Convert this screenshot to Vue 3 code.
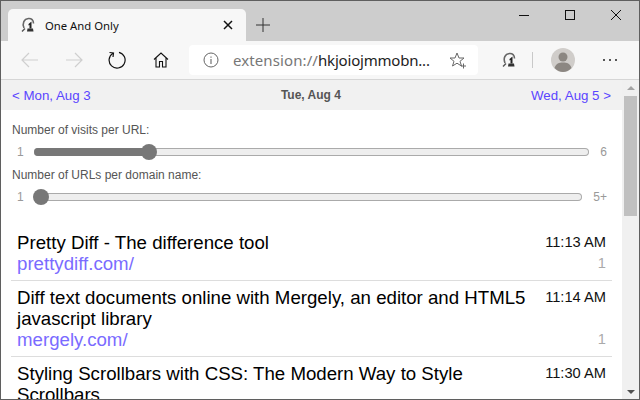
<template>
  <div class="window">
    <div class="tabstrip">
      <div class="tab">
        <svg class="favicon" width="16" height="16" viewBox="0 0 16 16">
          <path d="M4 11C2 6 4 2 8.500 1.500C11.500 1.300 13.500 3 13.500 6.500" fill="none" stroke="#666" stroke-width="1.600"/>
          <path d="M8.500 7L11.500 4.500V11.500H9.500V8L8.500 8.500Z" fill="#222"/>
          <path d="M7.500 11.500H13L13.500 14.500H7Z" fill="#333"/>
          <path d="M2 14.500L5 11.500" stroke="#555" stroke-width="1.500"/>
        </svg>
        <span class="tab-title">One And Only</span>
        <svg class="tab-close" width="10" height="10" viewBox="0 0 10 10">
          <path d="M1 1L9 9M9 1L1 9" stroke="#111" stroke-width="1.500"/>
        </svg>
      </div>
      <svg class="new-tab" width="14" height="14" viewBox="0 0 14 14">
        <path d="M7 0V14M0 7H14" stroke="#333" stroke-width="1"/>
      </svg>
      <div class="win-buttons">
        <svg width="12" height="12" viewBox="0 0 12 12"><path d="M1 6.500H11" stroke="#111"/></svg>
        <svg width="12" height="12" viewBox="0 0 12 12"><rect x="1.500" y="1.500" width="9" height="9" fill="none" stroke="#111"/></svg>
        <svg width="12" height="12" viewBox="0 0 12 12"><path d="M1 1L11 11M11 1L1 11" stroke="#111"/></svg>
      </div>
    </div>

    <div class="toolbar">
      <svg class="tool back" width="18" height="16" viewBox="0 0 18 16">
        <path d="M17 8H1M8 1L1 8L8 15" fill="none" stroke="#cfcfcf" stroke-width="1.200"/>
      </svg>
      <svg class="tool forward" width="18" height="16" viewBox="0 0 18 16">
        <path d="M1 8H17M10 1L17 8L10 15" fill="none" stroke="#cfcfcf" stroke-width="1.200"/>
      </svg>
      <svg class="tool reload" width="18" height="18" viewBox="0 0 18 18">
        <path d="M5 2.200A8 8 0 1 0 11 1.300" fill="none" stroke="#111" stroke-width="1.200"/>
        <path d="M1.500 1.500L5.500 2L5 6" fill="none" stroke="#111" stroke-width="1.200"/>
      </svg>
      <svg class="tool home" width="16" height="16" viewBox="0 0 16 16">
        <path d="M1 7.500L8 1L15 7.500M3 6V15H6.500V9.500H9.500V15H13V6" fill="none" stroke="#111" stroke-width="1.100"/>
      </svg>
      <div class="omnibox">
        <svg class="info" width="16" height="16" viewBox="0 0 16 16">
          <circle cx="8" cy="8" r="7" fill="none" stroke="#666" stroke-width="1"/>
          <path d="M8 7V12M8 4.500V5.700" stroke="#666" stroke-width="1.100"/>
        </svg>
        <span class="address"><span class="scheme">extension://</span>hkjoiojmmobn...</span>
        <svg class="star" width="18" height="18" viewBox="0 0 18 18">
          <path d="M8 2L10 7H15L11 10.300L12.500 15L8 12.200L3.500 15L5 10.300L1 7H6Z" fill="none" stroke="#666" stroke-width="1"/>
          <path d="M12 15H17M14.500 12.500V17.500" stroke="#666" stroke-width="1"/>
        </svg>
      </div>
      <svg class="ext" width="16" height="16" viewBox="0 0 16 16">
        <path d="M4 11C2 6 4 2 8.500 1.500C11.500 1.300 13.500 3 13.500 6.500" fill="none" stroke="#666" stroke-width="1.600"/>
        <path d="M8.500 7L11.500 4.500V11.500H9.500V8L8.500 8.500Z" fill="#222"/>
        <path d="M7.500 11.500H13L13.500 14.500H7Z" fill="#333"/>
        <path d="M2 14.500L5 11.500" stroke="#555" stroke-width="1.500"/>
      </svg>
      <div class="divider"></div>
      <svg class="avatar" width="24" height="24" viewBox="0 0 24 24">
        <circle cx="12" cy="12" r="12" fill="#d0cdca"/>
        <circle cx="12" cy="9" r="4.500" fill="#8c8782"/>
        <path d="M3.500 20C5 15.500 8 14.500 12 14.500C16 14.500 19 15.500 20.500 20C18 22.800 15 24 12 24C9 24 6 22.800 3.500 20Z" fill="#8c8782"/>
      </svg>
      <div class="more"><i></i><i></i><i></i></div>
    </div>

    <div class="page">
      <div class="content">
        <div class="day-nav">
          <a>&lt; Mon, Aug 3</a>
          <b>Tue, Aug 4</b>
          <a>Wed, Aug 5 &gt;</a>
        </div>

        <div class="filters">
          <div v-for="s in sliders" :key="s.label" class="filter">
            <div class="filter-label">{{ s.label }}</div>
            <div class="slider-row">
              <span class="min">1</span>
              <div class="track">
                <div class="fill" :style="{ width: s.fill + 'px' }"></div>
                <div class="thumb" :style="{ left: s.fill + 'px' }"></div>
              </div>
              <span class="max">{{ s.max }}</span>
            </div>
          </div>
        </div>

        <div class="visits">
          <div v-for="v in visits" :key="v.time" class="visit">
            <div class="visit-main">
              <div class="visit-title">{{ v.title }}</div>
              <a v-if="v.url" class="visit-url">{{ v.url }}</a>
            </div>
            <div class="visit-side">
              <div class="visit-time">{{ v.time }}</div>
              <div v-if="v.count" class="visit-count">{{ v.count }}</div>
            </div>
          </div>
        </div>
      </div>

      <div class="scrollbar">
        <span class="arrow up"></span>
        <div class="scroll-thumb"></div>
        <span class="arrow down"></span>
      </div>
    </div>
  </div>
</template>

<script setup>
const sliders = [
  { label: 'Number of visits per URL:', fill: 115, max: '6' },
  { label: 'Number of URLs per domain name:', fill: 7, max: '5+' }
];

const visits = [
  { title: 'Pretty Diff - The difference tool', url: 'prettydiff.com/', time: '11:13 AM', count: 1 },
  { title: 'Diff text documents online with Mergely, an editor and HTML5 javascript library', url: 'mergely.com/', time: '11:14 AM', count: 1 },
  { title: 'Styling Scrollbars with CSS: The Modern Way to Style Scrollbars', url: '', time: '11:30 AM', count: 0 }
];
</script>

<style>
html, body { margin: 0; overflow: hidden; }
</style>

<style scoped>
.window {
  width: 640px;
  height: 400px;
  box-sizing: border-box;
  border: 1px solid #5f5f5f;
  display: flex;
  flex-direction: column;
  overflow: hidden;
  font-family: "Liberation Sans", Arial, sans-serif;
  background: #fff;
}

.tabstrip {
  height: 40px;
  flex: none;
  background: #cdcdcd;
  display: flex;
  align-items: flex-end;
  padding-left: 7px;
}
.tab {
  width: 238px;
  height: 32px;
  box-sizing: border-box;
  background: #f7f7f7;
  border-radius: 5px 5px 0 0;
  display: flex;
  align-items: center;
  padding: 0 12px;
}
.favicon { margin-right: 9px; margin-top: -1px; }
.tab-title { flex: 1; font-family: "Noto Sans", sans-serif; font-size: 11.300px; color: #111; }
.tab-close { margin-right: 1px; }
.new-tab { margin: 0 0 9px 10px; }
.win-buttons {
  margin-left: auto;
  align-self: flex-start;
  display: flex;
  gap: 34px;
  padding: 8px 17px 0 0;
}

.toolbar {
  height: 39px;
  flex: none;
  box-sizing: border-box;
  background: #f7f7f7;
  border-bottom: 1px solid #d6d6d6;
  display: flex;
  align-items: center;
  padding-left: 20px;
}
.tool { flex: none; }
.forward { margin-left: 26px; }
.reload { margin-left: 25px; }
.home { margin-left: 27px; }
.omnibox {
  width: 289px;
  height: 30px;
  margin-left: 20px;
  background: #fff;
  border-radius: 4px;
  display: flex;
  align-items: center;
  padding: 0 11px 0 14px;
  box-sizing: border-box;
}
.address {
  flex: 1;
  margin-left: 14px;
  font-family: "Noto Sans", sans-serif;
  font-size: 15px;
  color: #222;
  white-space: nowrap;
  letter-spacing: -0.2px;
}
.scheme { color: #777; letter-spacing: 0.1px; }
.ext { margin-left: 23px; }
.divider { width: 1px; height: 16px; background: #c9c9c9; margin-left: 15px; }
.avatar { margin-left: 18px; }
.more { display: flex; gap: 4px; margin-left: 28px; }
.more i { width: 2px; height: 2px; background: #222; border-radius: 50%; }

.page {
  flex: 1;
  min-height: 0;
  display: flex;
}
.content {
  flex: 1;
  min-width: 0;
  overflow: hidden;
}

.day-nav {
  height: 30px;
  box-sizing: border-box;
  background: #f1f1f1;
  display: flex;
  justify-content: space-between;
  align-items: center;
  padding: 0 11px;
  font-size: 13.300px;
}
.day-nav a { color: #5a45ff; }
.day-nav b { color: #555; font-size: 12px; }

.filters { padding: 12px 11px 0; }
.filter { height: 45px; }
.filter-label { font-size: 12px; line-height: 16px; color: #555; }
.slider-row {
  display: flex;
  align-items: center;
  height: 21px;
  margin-top: 3px;
  font-size: 12px;
  color: #999;
}
.min { width: 22px; padding-left: 5px; box-sizing: border-box; }
.track {
  position: relative;
  flex: 1;
  height: 8px;
  box-sizing: border-box;
  background: #eee;
  border: 1px solid #aaa;
  border-left: none;
  border-radius: 4px;
}
.fill {
  position: absolute;
  left: 0;
  top: -1px;
  height: 8px;
  background: #777;
  border-radius: 4px 0 0 4px;
}
.thumb {
  position: absolute;
  top: -5px;
  width: 16px;
  height: 16px;
  margin-left: -8px;
  background: #777;
  border-radius: 50%;
}
.max { text-align: right; padding-right: 4px; box-sizing: border-box; flex: none; }
.filter:first-child .max { width: 22px; }
.filter:last-child .max { width: 29px; }

.visits { padding: 0 10px; margin-top: 14px; }
.visit {
  display: flex;
  justify-content: space-between;
  gap: 14px;
  padding: 6px 6px 6px;
  border-bottom: 1px solid #ddd;
}
.visit-main { flex: 1; min-width: 0; }
.visit-title { font-size: 18.670px; line-height: 21px; color: #000; }
.visit-url { display: block; font-size: 18.670px; line-height: 21px; color: #7a6bff; }
.visit-side { flex: none; display: flex; flex-direction: column; justify-content: space-between; text-align: right; }
.visit-time { font-size: 14.670px; line-height: 21px; color: #111; }
.visit-count { font-size: 14.670px; line-height: 21px; color: #aaa; }

.scrollbar {
  width: 17px;
  flex: none;
  background: #f0f0f0;
  position: relative;
  display: flex;
  flex-direction: column;
  align-items: center;
}
.arrow { width: 0; height: 0; border-left: 4px solid transparent; border-right: 4px solid transparent; }
.up { border-bottom: 4px solid #a3a3a3; margin-top: 6px; }
.down { border-top: 4px solid #505050; position: absolute; bottom: 5px; }
.scroll-thumb { width: 13px; height: 120px; background: #c0c0c0; margin-top: 6px; }
</style>
